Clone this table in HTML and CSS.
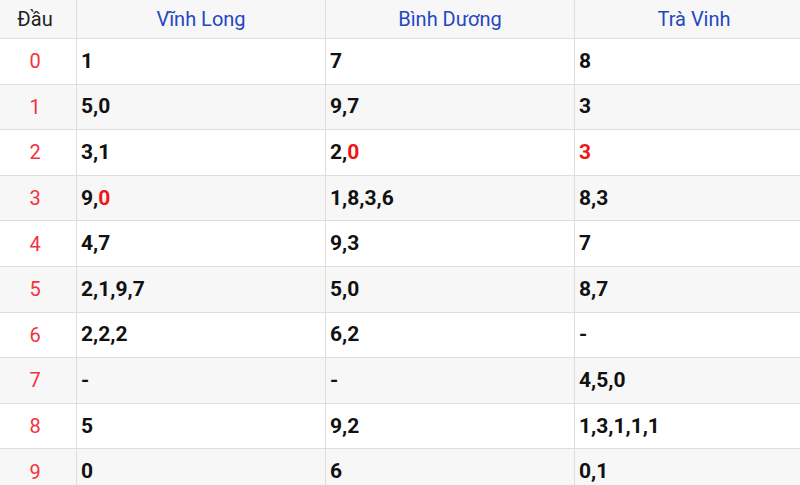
FILE: index.html
```html
<!DOCTYPE html>
<html lang="vi">
<head>
<meta charset="utf-8">
<link rel="stylesheet" href="styles.css">
</head>
<body>
<table class="loto">
  <colgroup>
    <col class="c-head"><col class="c-prov"><col class="c-prov"><col class="c-last">
  </colgroup>
  <thead>
    <tr><th class="dau">Đầu</th><th>Vĩnh Long</th><th>Bình Dương</th><th>Trà Vinh</th></tr>
  </thead>
  <tbody>
    <tr><td class="num">0</td><td>1</td><td>7</td><td>8</td></tr>
    <tr><td class="num">1</td><td>5,0</td><td>9,7</td><td>3</td></tr>
    <tr><td class="num">2</td><td>3,1</td><td>2,<span class="hl">0</span></td><td><span class="hl">3</span></td></tr>
    <tr><td class="num">3</td><td>9,<span class="hl">0</span></td><td>1,8,3,6</td><td>8,3</td></tr>
    <tr><td class="num">4</td><td>4,7</td><td>9,3</td><td>7</td></tr>
    <tr><td class="num">5</td><td>2,1,9,7</td><td>5,0</td><td>8,7</td></tr>
    <tr><td class="num">6</td><td>2,2,2</td><td>6,2</td><td>-</td></tr>
    <tr><td class="num">7</td><td>-</td><td>-</td><td>4,5,0</td></tr>
    <tr><td class="num">8</td><td>5</td><td>9,2</td><td>1,3,1,1,1</td></tr>
    <tr><td class="num">9</td><td>0</td><td>6</td><td>0,1</td></tr>
  </tbody>
</table>
</body>
</html>
```
FILE: styles.css
```css
html, body { margin: 0; padding: 0; background: #fff; overflow: hidden; }
body { font-family: Roboto, "Liberation Sans", sans-serif; }
.loto {
  border-collapse: collapse;
  table-layout: fixed;
  width: 820px;
  margin-left: -7px;
}
.c-head { width: 83px; }
.c-prov { width: 249px; }
.c-last { width: 239px; }
.loto th, .loto td {
  border: 1px solid #dedede;
  padding: 0 4px;
  line-height: 1;
}
.loto th {
  height: 38px;
  font-size: 20px;
  font-weight: 400;
  color: #2546c2;
  text-align: center;
  background: #f7f7f7;
  border-top: 0;
}
.loto th.dau { color: #222; }
.loto td {
  height: 44.6px;
  font-size: 21px;
  font-weight: 700;
  color: #111;
}
.loto td.num {
  text-align: center;
  font-size: 20px;
  font-weight: 400;
  color: #f2333d;
}
.loto tbody tr:nth-child(even) td { background: #f7f7f7; }
.hl { color: #f21414; }
```
